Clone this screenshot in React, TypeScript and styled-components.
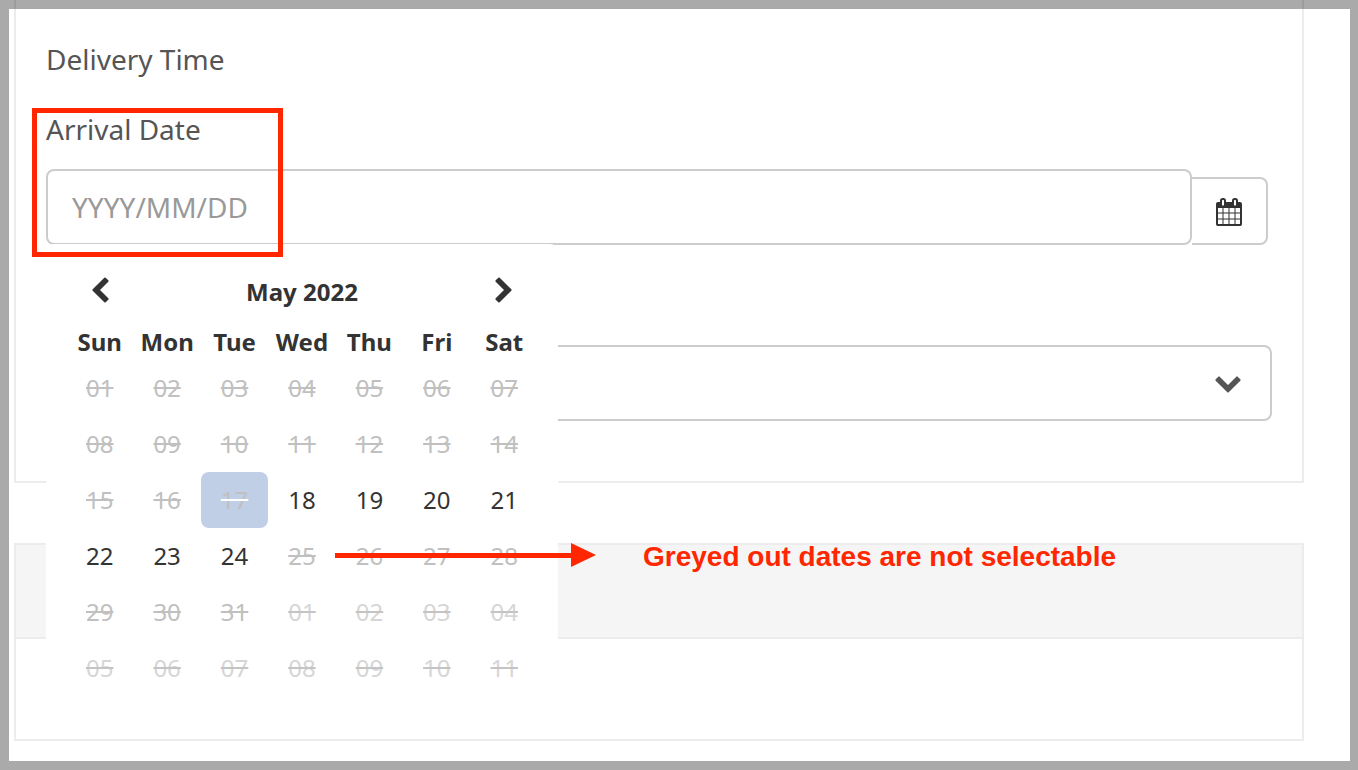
import React from "react";
import styled, { createGlobalStyle, css } from "styled-components";

const GlobalStyle = createGlobalStyle`
  *, *::before, *::after { box-sizing: border-box; }
  body {
    margin: 0;
    background: #fff;
    color: #555;
    font-family: "Noto Sans", "Open Sans", sans-serif;
    font-size: 28px;
    line-height: 40px;
  }
  input, select, button { font: inherit; color: inherit; margin: 0; }
`;

const Page = styled.main`
  position: relative;
  display: flex;
  flex-direction: column;
  gap: 60px;
  padding: 0 54px 29px 14px;
`;

const WindowFrame = styled.div`
  position: fixed;
  inset: 0;
  z-index: 5;
  border: solid rgba(0, 0, 0, 0.333);
  border-width: 9px 8px 9px 9px;
  pointer-events: none;
`;

const Panel = styled.section`
  border: 2px solid #ececec;
`;

const FormPanel = styled(Panel)`
  display: flex;
  flex-direction: column;
  border-top: 0;
  padding: 39px 30px 60px;
`;

const PanelHeader = styled.div`
  height: 94px;
  background: #f5f5f5;
  border-bottom: 2px solid #ececec;
`;

const PanelBody = styled.div`
  height: 100px;
`;

const GroupTitle = styled.h2`
  margin: 0 0 30px;
  font-size: 28px;
  font-weight: 400;
`;

const Field = styled.div`
  position: relative;
  display: flex;
  flex-direction: column;
  margin-bottom: 100px;
`;

const Label = styled.label`
  margin-bottom: 20px;
`;

const InputGroup = styled.div`
  display: flex;
  align-items: flex-end;
  padding-right: 4px;
`;

const controlBox = css`
  border: 2px solid #ccc;
  border-radius: 8px;
  background: #fff;
`;

const DateInput = styled.input`
  ${controlBox}
  flex: 1;
  min-width: 0;
  height: 76px;
  padding: 0 24px;
  outline: 0;
  &::placeholder { color: #999; opacity: 1; }
`;

const CalendarButton = styled.button`
  ${controlBox}
  display: flex;
  align-items: center;
  justify-content: center;
  width: 76px;
  height: 68px;
  padding: 2px 0 0;
  border-left: 0;
  border-radius: 0 8px 8px 0;
  color: #333;
`;

const SelectWrap = styled.div`
  position: relative;
  display: flex;
`;

const Select = styled.select`
  ${controlBox}
  appearance: none;
  width: 100%;
  height: 76px;
  padding: 0 24px;
`;

const SelectArrow = styled.span`
  position: absolute;
  right: 30px;
  top: 23px;
  display: flex;
  pointer-events: none;
`;

const Popup = styled.div`
  position: absolute;
  z-index: 2;
  top: 135px;
  left: 0;
  width: 512px;
  padding: 20px;
  border-radius: 8px;
  background: #fff;
  color: #333;
  font-size: 24px;
  line-height: 32px;
`;

const Month = styled.table`
  width: 100%;
  table-layout: fixed;
  border-collapse: collapse;
  text-align: center;
`;

const TitleCell = styled.th`
  height: 56px;
  padding: 0;
  font-weight: 700;
`;

const WeekdayCell = styled.th`
  height: 40px;
  padding: 4px 0 0;
  font-weight: 700;
`;

const DayCell = styled.td`
  height: 56px;
  padding: 0;
`;

const NavButton = styled.button`
  display: flex;
  align-items: center;
  justify-content: center;
  width: 100%;
  height: 56px;
  padding: 0 0 2px;
  border: 0;
  background: none;
`;

type DayKind = "open" | "blocked" | "outside" | "today";

const dayColors: Record<DayKind, { text: string; line: string }> = {
  open: { text: "#333", line: "transparent" },
  blocked: { text: "#c0c0c0", line: "#c0c0c0" },
  outside: { text: "#d6d6d6", line: "#c4c4c4" },
  today: { text: "#c0c0c0", line: "#fff" },
};

const DayButton = styled.button<{ $kind: DayKind }>`
  width: 100%;
  height: 56px;
  padding: 0;
  border: 0;
  border-radius: 8px;
  background: ${(p) => (p.$kind === "today" ? "#c0cee6" : "transparent")};
  color: ${(p) => dayColors[p.$kind].text};
  text-decoration: ${(p) =>
    p.$kind === "open" ? "none" : `line-through 2px ${dayColors[p.$kind].line}`};
`;

const Highlight = styled.div`
  position: absolute;
  z-index: 3;
  top: -1px;
  left: -14px;
  width: 251px;
  height: 149px;
  border: 5px solid #ff2600;
  pointer-events: none;
`;

const Note = styled.p`
  position: absolute;
  z-index: 3;
  top: 537px;
  left: 335px;
  display: flex;
  align-items: center;
  gap: 47px;
  margin: 0;
  color: #ff2600;
  font-family: "Liberation Sans", Arial, sans-serif;
  font-size: 28px;
  font-weight: 700;
  white-space: nowrap;
`;

const Icon = ({ d }: { d: string }) => (
  <svg width="28" height="28" viewBox="0 0 1792 1792" fill="currentColor" aria-hidden="true">
    <path d={d} />
  </svg>
);

const icons = {
  calendar:
    "M192 1664h288v-288h-288v288zm352 0h320v-288h-320v288zm-352-352h288v-320h-288v320zm352 0h320v-320h-320v320zm-352-384h288v-288h-288v288zm736 736h320v-288h-320v288zm-384-736h320v-288h-320v288zm768 736h288v-288h-288v288zm-384-352h320v-320h-320v320zm-352-864v-288q0-13-9.5-22.5t-22.5-9.5h-64q-13 0-22.5 9.5t-9.5 22.5v288q0 13 9.5 22.5t22.5 9.5h64q13 0 22.5-9.5t9.5-22.5zm736 864h288v-320h-288v320zm-384-384h320v-288h-320v288zm384 0h288v-288h-288v288zm32-480v-288q0-13-9.5-22.5t-22.5-9.5h-64q-13 0-22.5 9.5t-9.5 22.5v288q0 13 9.5 22.5t22.5 9.5h64q13 0 22.5-9.5t9.5-22.5zm384-64v1280q0 52-38 90t-90 38h-1408q-52 0-90-38t-38-90v-1280q0-52 38-90t90-38h128v-96q0-66 47-113t113-47h64q66 0 113 47t47 113v96h384v-96q0-66 47-113t113-47h64q66 0 113 47t47 113v96h128q52 0 90 38t38 90z",
  left: "M1427 301l-531 531 531 531q19 19 19 45t-19 45l-166 166q-19 19-45 19t-45-19l-742-742q-19-19-19-45t19-45l742-742q19-19 45-19t45 19l166 166q19 19 19 45t-19 45z",
  right:
    "M1363 877l-742 742q-19 19-45 19t-45-19l-166-166q-19-19-19-45t19-45l531-531-531-531q-19-19-19-45t19-45l166-166q19-19 45-19t45 19l742 742q19 19 19 45t-19 45z",
  down: "M1683 808l-742 741q-19 19-45 19t-45-19l-742-741q-19-19-19-45.5t19-45.5l166-165q19-19 45-19t45 19l531 531 531-531q19-19 45-19t45 19l166 165q19 19 19 45.5t-19 45.5z",
};

const weekdays = ["Sun", "Mon", "Tue", "Wed", "Thu", "Fri", "Sat"];

const kindOf = (index: number): DayKind => {
  const day = index + 1;
  if (day > 31) return "outside";
  if (day === 17) return "today";
  return day > 17 && day < 25 ? "open" : "blocked";
};

const weeks = Array.from({ length: 6 }, (_, week) =>
  Array.from({ length: 7 }, (_, weekday) => {
    const index = week * 7 + weekday;
    return { label: String((index % 31) + 1).padStart(2, "0"), kind: kindOf(index) };
  })
);

const DatePopup = () => (
  <Popup>
    <Month>
      <thead>
        <tr>
          <TitleCell>
            <NavButton type="button" aria-label="Previous month">
              <Icon d={icons.left} />
            </NavButton>
          </TitleCell>
          <TitleCell colSpan={5}>May 2022</TitleCell>
          <TitleCell>
            <NavButton type="button" aria-label="Next month">
              <Icon d={icons.right} />
            </NavButton>
          </TitleCell>
        </tr>
        <tr>
          {weekdays.map((name) => (
            <WeekdayCell key={name} scope="col">{name}</WeekdayCell>
          ))}
        </tr>
      </thead>
      <tbody>
        {weeks.map((days, week) => (
          <tr key={week}>
            {days.map(({ label, kind }) => (
              <DayCell key={label}>
                <DayButton type="button" $kind={kind} disabled={kind !== "open"}>
                  {label}
                </DayButton>
              </DayCell>
            ))}
          </tr>
        ))}
      </tbody>
    </Month>
  </Popup>
);

export default function App() {
  return (
    <>
      <GlobalStyle />
      <Page>
        <FormPanel>
          <GroupTitle id="delivery-time">Delivery Time</GroupTitle>
          <Field>
            <Label htmlFor="arrival-date">Arrival Date</Label>
            <InputGroup>
              <DateInput id="arrival-date" type="text" placeholder="YYYY/MM/DD" />
              <CalendarButton type="button" aria-label="Open calendar">
                <Icon d={icons.calendar} />
              </CalendarButton>
            </InputGroup>
            <DatePopup />
            <Highlight />
          </Field>
          <SelectWrap>
            <Select aria-labelledby="delivery-time" defaultValue="">
              <option value="" />
            </Select>
            <SelectArrow>
              <Icon d={icons.down} />
            </SelectArrow>
          </SelectWrap>
        </FormPanel>
        <Panel>
          <PanelHeader />
          <PanelBody />
        </Panel>
        <Note>
          <svg width="261" height="28" viewBox="0 0 261 28" fill="currentColor" aria-hidden="true">
            <path d="M0 10H236V0L261 12L236 24V15H0Z" />
          </svg>
          Greyed out dates are not selectable
        </Note>
      </Page>
      <WindowFrame />
    </>
  );
}
